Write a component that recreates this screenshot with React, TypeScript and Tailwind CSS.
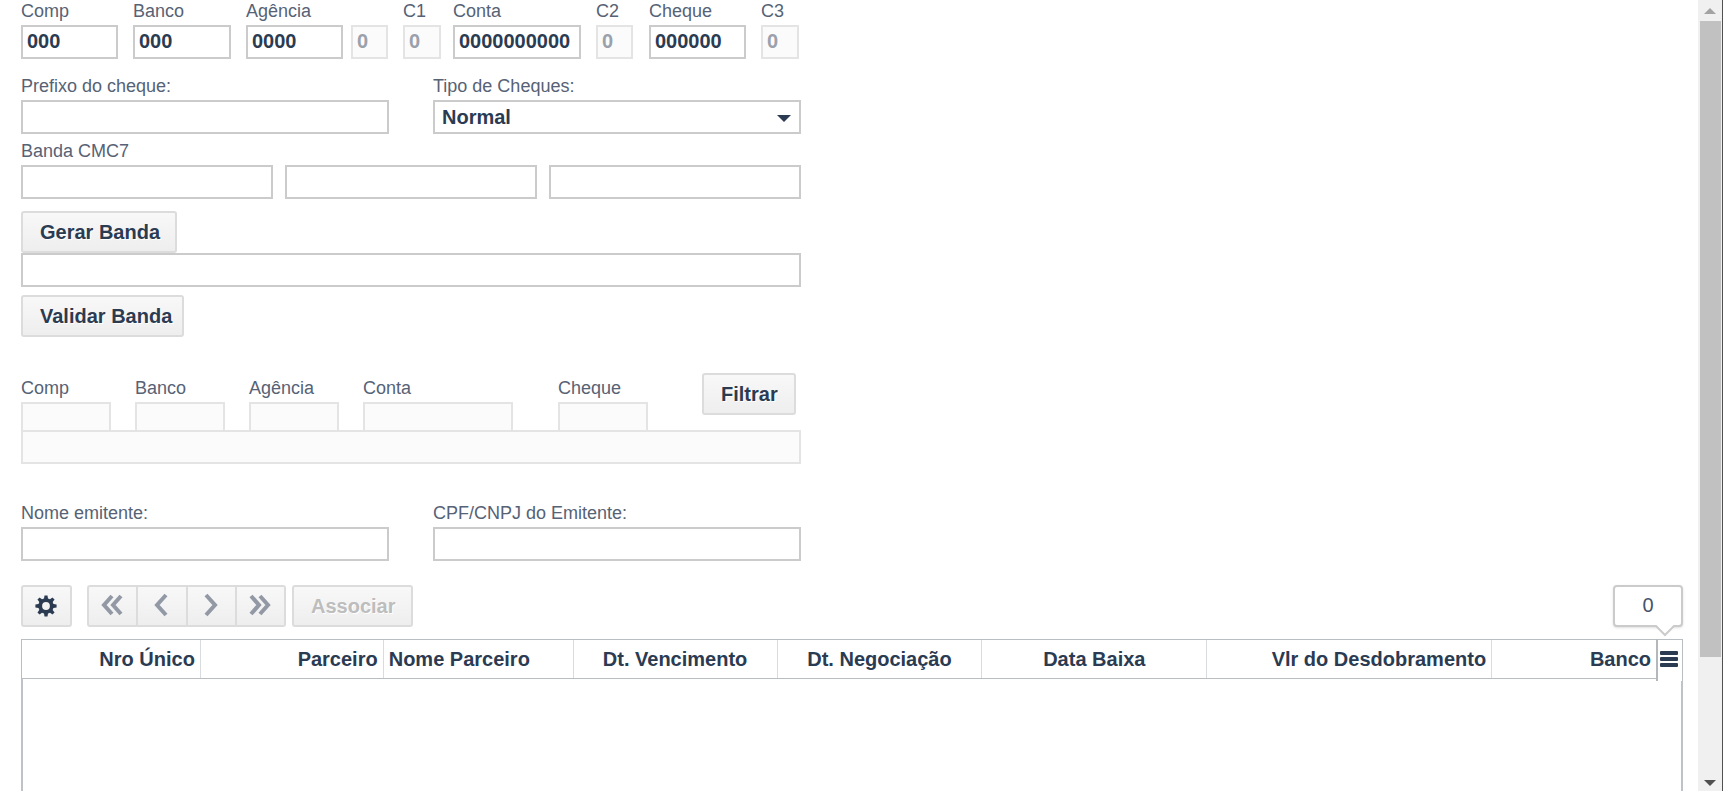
import type { ReactNode } from "react";

const checkFields = [
  { id: "comp", label: "Comp", value: "000", box: "w-[97px]", space: "" },
  { id: "banco", label: "Banco", value: "000", box: "w-[98px]", space: "ml-[15px]" },
  { id: "agencia", label: "Agência", value: "0000", box: "w-[97px]", space: "ml-[15px]" },
  { id: "agencia-dv", label: "", value: "0", box: "w-[37px]", space: "ml-2", disabled: true },
  { id: "c1", label: "C1", value: "0", box: "w-[38px]", space: "ml-[15px]", disabled: true },
  { id: "conta", label: "Conta", value: "0000000000", box: "w-[128px]", space: "ml-3" },
  { id: "c2", label: "C2", value: "0", box: "w-[37px]", space: "ml-[15px]", disabled: true },
  { id: "cheque", label: "Cheque", value: "000000", box: "w-[97px]", space: "ml-4" },
  { id: "c3", label: "C3", value: "0", box: "w-[38px]", space: "ml-[15px]", disabled: true },
];

const filterFields = [
  { id: "f-comp", label: "Comp", box: "w-[90px]", space: "" },
  { id: "f-banco", label: "Banco", box: "w-[90px]", space: "ml-6" },
  { id: "f-agencia", label: "Agência", box: "w-[90px]", space: "ml-6" },
  { id: "f-conta", label: "Conta", box: "w-[150px]", space: "ml-6" },
  { id: "f-cheque", label: "Cheque", box: "w-[90px]", space: "ml-[45px]" },
];

const columns = [
  { name: "Nro Único", cls: "w-[179px] text-right" },
  { name: "Parceiro", cls: "w-[183px] text-right" },
  { name: "Nome Parceiro", cls: "w-[190px] text-left" },
  { name: "Dt. Vencimento", cls: "w-[204px] text-center" },
  { name: "Dt. Negociação", cls: "w-[205px] text-center" },
  { name: "Data Baixa", cls: "w-[225px] text-center" },
  { name: "Vlr do Desdobramento", cls: "w-[285px] text-right" },
  { name: "Banco", cls: "w-[164px] text-right" },
];

const inputBase =
  "block h-[34px] border-2 px-1 pb-[2px] text-[20px] font-bold border-[#cbcbcb] bg-white text-[#2b3b52] disabled:border-[#e4e4e4] disabled:bg-[#fbfbfb] disabled:text-[#9aa1ac]";

const buttonBase =
  "h-[42px] border-2 border-[#dcdcdc] bg-linear-to-b from-[#f8f8f8] to-[#eeeeee] text-[#2b3b52] disabled:text-[#bdbdbd]";

function Label({ htmlFor, children }: { htmlFor: string; children: ReactNode }) {
  return (
    <label htmlFor={htmlFor} className="mb-1 block h-[21px] text-[18px] leading-[23px] whitespace-nowrap text-[#566275]">
      {children}
    </label>
  );
}

function TextButton({ children, width, disabled }: { children: ReactNode; width: string; disabled?: boolean }) {
  return (
    <button
      type="button"
      disabled={disabled}
      className={`${buttonBase} ${width} rounded-[3px] pl-[17px] text-left text-[20px] font-bold whitespace-nowrap [text-shadow:1px_1px_0_#fff]`}
    >
      {children}
    </button>
  );
}

function NavButton({ label, points, shape }: { label: string; points: string[]; shape: string }) {
  return (
    <button type="button" aria-label={label} disabled className={`${buttonBase} ${shape} flex items-center justify-center pr-[2px] pb-[2px]`}>
      <svg width="24" height="24" viewBox="0 0 24 24" fill="none" stroke="#9299a5" strokeWidth="4">
        {points.map((p) => (
          <polyline key={p} points={p} />
        ))}
      </svg>
    </button>
  );
}

function GearIcon() {
  return (
    <svg width="22" height="22" viewBox="-11 -11 22 22" fill="#2b3b52">
      {[0, 45, 90, 135, 180, 225, 270, 315].map((a) => (
        <path key={a} d="M-2.2 -6 L-1.5 -10.6 H1.5 L2.2 -6 Z" transform={`rotate(${a})`} />
      ))}
      <circle r="5.8" fill="none" stroke="#2b3b52" strokeWidth="3.8" />
    </svg>
  );
}

function ScrollBar() {
  return (
    <div className="flex w-[25px] shrink-0 flex-col border-r border-[#505050] bg-[#f0f0f0]" aria-hidden="true">
      <div className="flex h-[21px] items-center justify-center">
        <svg width="12" height="6" viewBox="0 0 12 6" fill="#a3a3a3">
          <path d="M0 6 L6 0 L12 6 Z" />
        </svg>
      </div>
      <div className="flex-1 pr-px pl-[2px]">
        <div className="h-[84.5%] bg-[#c1c1c1]" />
      </div>
      <div className="flex h-[17px] items-center justify-center">
        <svg width="12" height="6" viewBox="0 0 12 6" fill="#505050">
          <path d="M0 0 L6 6 L12 0 Z" />
        </svg>
      </div>
    </div>
  );
}

export default function App() {
  return (
    <div className="flex h-screen overflow-hidden bg-white font-['Liberation_Sans',Arial,sans-serif]">
      <main className="flex min-w-0 flex-1 flex-col pr-[15px] pl-[21px]">
        <form className="w-full max-w-[780px]">
          {/* Dados do cheque */}
          <div className="flex">
            {checkFields.map((f) => (
              <div key={f.id} className={f.space}>
                <Label htmlFor={f.id}>{f.label}</Label>
                <input id={f.id} defaultValue={f.value} disabled={f.disabled} className={`${inputBase} ${f.box}`} />
              </div>
            ))}
          </div>

          <div className="mt-4 grid grid-cols-2 gap-11">
            <div>
              <Label htmlFor="prefixo">Prefixo do cheque:</Label>
              <input id="prefixo" className={`${inputBase} w-full`} />
            </div>
            <div>
              <Label htmlFor="tipo">Tipo de Cheques:</Label>
              <div className="relative">
                <select
                  id="tipo"
                  className="block h-[34px] w-full appearance-none border-2 border-[#cbcbcb] bg-white px-[7px] text-[20px] leading-[28px] font-bold text-[#2b3b52]"
                >
                  <option>Normal</option>
                </select>
                <svg className="pointer-events-none absolute top-[15px] right-[10px]" width="14" height="7" viewBox="0 0 14 7" fill="#2b3b52">
                  <path d="M0 0 H14 L7 7 Z" />
                </svg>
              </div>
            </div>
          </div>

          {/* Banda magnética */}
          <div className="mt-[6px]">
            <Label htmlFor="banda1">Banda CMC7</Label>
            <div className="grid grid-cols-3 gap-3">
              <input id="banda1" className={`${inputBase} w-full`} />
              <input aria-label="Banda CMC7 2" className={`${inputBase} w-full`} />
              <input aria-label="Banda CMC7 3" className={`${inputBase} w-full`} />
            </div>
          </div>
          <div className="mt-3 flex">
            <TextButton width="w-[156px]">Gerar Banda</TextButton>
          </div>
          <input aria-label="Banda completa" className={`${inputBase} w-full`} />
          <div className="mt-2 flex">
            <TextButton width="w-[163px]">Validar Banda</TextButton>
          </div>

          {/* Filtro */}
          <div className="mt-9 flex items-start">
            {filterFields.map((f) => (
              <div key={f.id} className={`pt-1 ${f.space}`}>
                <Label htmlFor={f.id}>{f.label}</Label>
                <input id={f.id} disabled className={`block h-7 border-2 border-b-0 border-[#e4e4e4] bg-[#fbfbfb] ${f.box}`} />
              </div>
            ))}
            <div className="ml-auto pr-[5px]">
              <TextButton width="w-[94px]">Filtrar</TextButton>
            </div>
          </div>
          <input aria-label="Banda filtrada" disabled className={`${inputBase} w-full`} />

          <div className="mt-[38px] grid grid-cols-2 gap-11">
            <div>
              <Label htmlFor="nome">Nome emitente:</Label>
              <input id="nome" className={`${inputBase} w-full`} />
            </div>
            <div>
              <Label htmlFor="cpf">CPF/CNPJ do Emitente:</Label>
              <input id="cpf" className={`${inputBase} w-full`} />
            </div>
          </div>
        </form>

        {/* Barra de ferramentas */}
        <div className="mt-6 flex">
          <button type="button" aria-label="Configurações" className={`${buttonBase} flex w-[51px] items-center justify-center rounded-[3px] pr-[2px]`}>
            <GearIcon />
          </button>
          <div className="ml-[15px] flex">
            <NavButton label="Primeiro" shape="w-[51px] rounded-l-[3px]" points={["12,3 4,12 12,21", "21,3 13,12 21,21"]} />
            <NavButton label="Anterior" shape="w-[50px] border-l-0" points={["17,2 8,12 17,22"]} />
            <NavButton label="Próximo" shape="w-[49px] border-l-0" points={["7,2 16,12 7,22"]} />
            <NavButton label="Último" shape="w-[49px] border-l-0 rounded-r-[3px]" points={["3,3 11,12 3,21", "12,3 20,12 12,21"]} />
          </div>
          <div className="ml-[6px]">
            <TextButton width="w-[121px]" disabled>
              Associar
            </TextButton>
          </div>
          <div className="relative ml-auto flex h-[42px] w-[70px] items-center justify-center rounded-[4px] border-2 border-[#cbcbcb] bg-white pb-[2px] text-[20px] text-[#46536a] shadow-sm">
            0
            <svg className="absolute top-[38px] right-[6px]" width="20" height="12" viewBox="0 0 20 12">
              <path d="M1 0 H19 L10 9 Z" fill="#fff" />
              <path d="M0 1 H1 L10 10 L19 1 H20" fill="none" stroke="#cbcbcb" strokeWidth="2" />
            </svg>
          </div>
        </div>

        {/* Grade */}
        <div className="mt-3 flex min-h-0 flex-1 flex-col">
          <div className="flex h-10 items-start">
            <table className="h-10 min-w-0 flex-1 table-fixed border-separate border-spacing-0 border-y border-l border-[#b9bec3]">
              <thead>
                <tr>
                  {columns.map((c) => (
                    <th
                      key={c.name}
                      scope="col"
                      className={`${c.cls} border-r border-[#d9dcdf] px-[5px] text-[20px] font-bold whitespace-nowrap text-[#2b3b52] last:border-r-0`}
                    >
                      {c.name}
                    </th>
                  ))}
                </tr>
              </thead>
            </table>
            <button
              type="button"
              aria-label="Colunas"
              className="z-10 flex h-[42px] w-[27px] shrink-0 justify-center border-t border-r border-l-2 border-t-[#b9bec3] border-r-[#b9bec3] border-l-[#b5b8bb] bg-white pt-[11px] pr-[2px]"
            >
              <svg width="18" height="16" viewBox="0 0 18 16" fill="#2b3b52">
                <rect width="18" height="4" rx="1" />
                <rect y="6" width="18" height="4" rx="1" />
                <rect y="12" width="18" height="4" rx="1" />
              </svg>
            </button>
          </div>
          <div className="flex-1 border-x-2 border-[#bdc3c8]" />
        </div>
      </main>
      <ScrollBar />
    </div>
  );
}
